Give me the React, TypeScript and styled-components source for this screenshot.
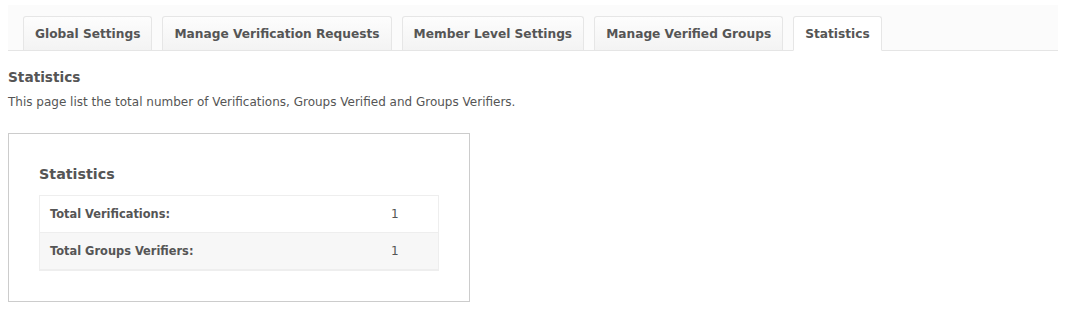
import React from "react";
import styled, { createGlobalStyle } from "styled-components";

const Global = createGlobalStyle`
  body {
    margin: 0;
    background: #fff;
    font-family: Tahoma, "DejaVu Sans", sans-serif;
    color: #555;
  }
`;

const Page = styled.div`
  padding: 5px 11px 0 8px;
`;

const TabBar = styled.div`
  display: flex;
  gap: 10px;
  background: #fbfbfb;
  padding: 11px 15px 0 15px;
  border-bottom: 1px solid #e5e5e5;
  height: 34px;
`;

const Tab = styled.div<{ $active?: boolean }>`
  display: flex;
  align-items: center;
  padding: 0 11px;
  box-sizing: border-box;
  border: 1px solid #e6e6e6;
  border-bottom: ${(p) => (p.$active ? "1px solid #fff" : "none")};
  border-radius: 3px 3px 0 0;
  background: ${(p) => (p.$active ? "#fff" : "linear-gradient(#fdfdfd, #f3f3f3)")};
  font-size: 12.2px;
  font-weight: bold;
  color: #555;
  white-space: nowrap;
  margin-bottom: ${(p) => (p.$active ? "-1px" : "0")};
  height: ${(p) => (p.$active ? "35px" : "34px")};
`;

const Title = styled.h3`
  margin: 17px 0 0 0;
  font-size: 13.7px;
  font-weight: bold;
  color: #555;
  line-height: 18px;
`;

const Desc = styled.p`
  margin: 8px 0 0 0;
  font-size: 12px;
  color: #555;
  line-height: 16px;
`;

const Box = styled.div`
  margin-top: 23px;
  width: 462px;
  box-sizing: border-box;
  border: 1px solid #ccc;
  padding: 30px 30px 30px 30px;
`;

const BoxTitle = styled.h4`
  margin: 0 0 11px 0;
  font-size: 14.3px;
  font-weight: bold;
  color: #555;
  line-height: 20px;
`;

const Table = styled.div`
  width: 400px;
  box-sizing: border-box;
  border: 1px solid #eee;
  border-bottom-width: 2px;
`;

const Row = styled.div<{ $alt?: boolean }>`
  display: flex;
  align-items: center;
  height: 36px;
  padding: 0 10px;
  background: ${(p) => (p.$alt ? "#f7f7f7" : "#fff")};
  & + & {
    border-top: 1px solid #eee;
  }
`;

const Label = styled.div`
  flex: 0 0 341px;
  font-size: 11.4px;
  font-weight: bold;
  color: #555;
`;

const Value = styled.div`
  font-size: 12px;
  color: #555;
`;

export default function App() {
  const tabs = [
    "Global Settings",
    "Manage Verification Requests",
    "Member Level Settings",
    "Manage Verified Groups",
    "Statistics",
  ];
  return (
    <Page>
      <Global />
      <TabBar>
        {tabs.map((t) => (
          <Tab key={t} $active={t === "Statistics"}>
            {t}
          </Tab>
        ))}
      </TabBar>
      <Title>Statistics</Title>
      <Desc>
        This page list the total number of Verifications, Groups Verified and Groups Verifiers.
      </Desc>
      <Box>
        <BoxTitle>Statistics</BoxTitle>
        <Table>
          <Row>
            <Label>Total Verifications:</Label>
            <Value>1</Value>
          </Row>
          <Row $alt>
            <Label>Total Groups Verifiers:</Label>
            <Value>1</Value>
          </Row>
        </Table>
      </Box>
    </Page>
  );
}
